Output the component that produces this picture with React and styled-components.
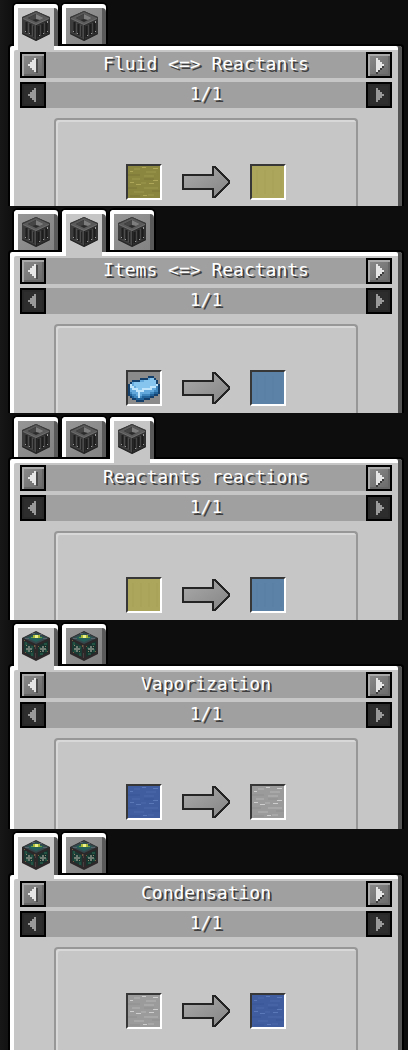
import React from 'react';
import styled, { createGlobalStyle } from 'styled-components';

const recipes = [
  { title: 'Fluid <=> Reactants', icon: 'crate', tabs: 2, active: 0, input: 'fluidYellow', output: 'yellow', bottom: 6 },
  { title: 'Items <=> Reactants', icon: 'crate', tabs: 3, active: 1, input: 'ingot', output: 'blue', bottom: 7 },
  { title: 'Reactants reactions', icon: 'crate', tabs: 3, active: 2, input: 'yellow', output: 'blue', bottom: 7 },
  { title: 'Vaporization', icon: 'core', tabs: 2, active: 0, input: 'water', output: 'steam', bottom: 9 },
  { title: 'Condensation', icon: 'core', tabs: 2, active: 0, input: 'steam', output: 'water', bottom: 21 },
];

const fluids = {
  fluidYellow: { base: '#8a853f', dark: '#827d3b', mid: '#948f47', light: '#aea75a' },
  yellow: { base: '#aba65c', dark: '#a8a359' },
  blue: { base: '#5d82a7', dark: '#5b80a5' },
  water: { base: '#405da0', dark: '#3c599c', mid: '#4663a5', light: '#5a78b8' },
  steam: { base: '#9b9b9b', dark: '#959595', mid: '#a8a8a8', light: '#cecece' },
};

// x, y, width, shade
const streaks = [
  [6, 2, 6, 'mid'], [14, 1, 4, 'light'], [25, 2, 5, 'light'], [2, 5, 3, 'light'],
  [18, 5, 10, 'mid'], [0, 8, 12, 'dark'], [16, 9, 10, 'mid'], [4, 12, 8, 'mid'],
  [16, 12, 10, 'dark'], [25, 14, 5, 'light'], [2, 16, 4, 'light'], [8, 18, 5, 'light'],
  [21, 17, 5, 'light'], [13, 16, 5, 'mid'], [0, 21, 9, 'dark'], [16, 21, 14, 'mid'],
  [6, 25, 10, 'mid'], [15, 29, 4, 'light'], [24, 24, 8, 'dark'], [2, 29, 10, 'dark'],
  [20, 28, 6, 'mid'],
];

const ingotColors = {
  k: '#14406b', d: '#22639a', m: '#3f86bd', b: '#62a8da', l: '#86c5ee', w: '#bde4fa',
};

const ingotRows = [
  '................',
  '................',
  '..........kkk...',
  '......kkkkbllk..',
  '..kkkkbbllllllk.',
  '.kblllllllllllk.',
  'kwblllllllllllwk',
  'kwwblllllllwwwmk',
  'kbwwwllwwwwwbbmk',
  'kbbbwwwwbbbbbmmk',
  'kmbbbwbbbbbmmddk',
  'kdmmbwbmmmmddkk.',
  '.kdmmwmddddkk...',
  '..kkddddkkk.....',
  '....kkkk........',
  '................',
];

function Crate() {
  return (
    <svg width="28" height="30" viewBox="0 0 28 30" aria-hidden="true">
      <polygon points="14,0 28,6 28,23 14,30 0,23 0,6" fill="#2a2a2a" />
      <polygon points="0,7 14,14 14,30 0,23" fill="#3d3d3d" />
      <polygon points="28,7 14,14 14,30 28,23" fill="#313131" />
      <polygon points="14,0 28,7 14,14 0,7" fill="#5a5a5a" />
      <polygon points="14,3 22,7 14,11 6,7" fill="#2b2b2b" />
      <polygon points="14,3 14,8 10,9 6,7" fill="#454545" />
      <polygon points="14,3 22,7 18,9 14,8" fill="#7d7d7d" />
      <path d="M0 7L14 0.5L28 7" fill="none" stroke="#3c3c3c" />
      <path d="M1 7.5L14 13.5L27 7.5" fill="none" stroke="#6e6e6e" />
      <path d="M4.5 11V22M8.5 13V24" stroke="#1e1e1e" strokeWidth="2" />
      <path d="M6.5 12V23M10.5 14V25" stroke="#4c4c4c" />
      <path d="M11.5 15V26" stroke="#252525" />
      <path d="M16.5 15V26M20.5 13V24M24.5 11V22" stroke="#1c1c1c" strokeWidth="2" />
      <path d="M18.5 14V25M22.5 12V23" stroke="#454545" />
      <path d="M13.5 14V29" stroke="#4a4a4a" />
      <path d="M14.5 14V29" stroke="#222" />
      <path d="M0.5 22.5L14 29L27.5 22.5" fill="none" stroke="#252525" />
      <path d="M3 20h1v1h-1zM7 22h1v1h-1zM17 24h1v1h-1zM21 22h1v1h-1zM25 20h1v1h-1zM25 10h1v2h-1z" fill="#9a9a9a" />
    </svg>
  );
}

function Core() {
  return (
    <svg width="28" height="30" viewBox="0 0 28 30" aria-hidden="true">
      <polygon points="14,0 28,7 28,23 14,30 0,23 0,7" fill="#2c282a" />
      <polygon points="14,1 27,7 14,13 1,7" fill="#34484c" />
      <polygon points="14,3 23,7 14,11 5,7" fill="#245f59" />
      <path d="M10 2h3v1h-3zM17 3h3v1h-3zM3 7h4v1h-4zM21 7h4v1h-4z" fill="#566169" />
      <path d="M11 4h6v1h-6zM9 6h2v1h-2zM18 6h2v1h-2z" fill="#6b9a44" />
      <rect x="11" y="4" width="7" height="3" fill="#a9ba38" />
      <rect x="13" y="4" width="3" height="3" fill="#eef08a" />
      <polygon points="2,10 12,15 12,26 2,21" fill="#1b3a33" />
      <polygon points="26,10 16,15 16,26 26,21" fill="#17322c" />
      <path d="M3 11h2v3h-2zM9 15h2v3h-2zM4 19h3v2h-3zM9 22h2v3h-2zM17 16h2v2h-2zM22 12h3v2h-3zM23 18h2v3h-2zM18 22h3v2h-3z" fill="#225343" />
      <path d="M6 15h2v6h-2zM4 17h6v2h-6zM20 15h2v6h-2zM18 17h6v2h-6z" fill="#6e7c73" />
      <path d="M4 14h1v1h-1zM9 20h1v1h-1zM18 20h1v1h-1zM23 15h1v1h-1z" fill="#94876d" />
      <path d="M2 9h1v1h-1zM12 14h1v2h-1zM3 21h1v1h-1zM16 15h1v1h-1zM25 20h1v1h-1z" fill="#74603f" />
      <path d="M13 14h1v4h-1zM13 22h1v5h-1z" fill="#4a3f41" />
    </svg>
  );
}

function Fluid({ kind }) {
  const c = fluids[kind];
  return (
    <svg width="32" height="32" viewBox="0 0 32 32" shapeRendering="crispEdges" aria-hidden="true">
      <rect width="32" height="32" fill={c.base} />
      {c.light
        ? streaks.map(([x, y, w, shade]) => (
            <rect key={`${x}-${y}`} x={x} y={y} width={w} height={shade === 'light' ? 1 : 2} fill={c[shade]} />
          ))
        : [4, 12, 20, 28].map((x) => <rect key={x} x={x} y="4" width="2" height="24" fill={c.dark} />)}
    </svg>
  );
}

function Ingot() {
  return (
    <svg width="32" height="32" viewBox="0 0 16 16" shapeRendering="crispEdges" aria-hidden="true">
      {ingotRows.map((row, y) =>
        row.split('').map((p, x) =>
          p === '.' ? null : <rect key={`${x}-${y}`} x={x} y={y} width="1" height="1" fill={ingotColors[p]} />
        )
      )}
    </svg>
  );
}

function ProgressArrow() {
  return (
    <svg width="48" height="32" viewBox="0 0 48 32" shapeRendering="crispEdges" aria-hidden="true">
      <defs>
        <linearGradient id="arrowFill" x1="0" y1="0" x2="1" y2="1">
          <stop offset="0" stopColor="#aaaaaa" />
          <stop offset="1" stopColor="#858585" />
        </linearGradient>
      </defs>
      <path d="M1 9H31V1H33L47 15V17L33 31H31V23H1Z" fill="url(#arrowFill)" stroke="#242424" strokeWidth="2" />
    </svg>
  );
}

function Triangle({ right, disabled }) {
  return (
    <svg width="22" height="22" viewBox="0 0 22 22" shapeRendering="crispEdges" aria-hidden="true">
      <g transform={right ? 'translate(22 0) scale(-1 1)' : undefined}>
        {!disabled && <path d="M14 5h2v14h-2z" fill={right ? 'none' : '#4b4b4b'} />}
        {!disabled && right && <path d="M6 12h2v2h2v2h2v2h2v2h-2v-2h-2v-2h-2v-2h-2z" fill="#3d3d3d" />}
        <path d="M12 4h2v14h-2v-2h-2v-2h-2v-2h-2v-2h2v-2h2v-2h2z" fill={disabled ? '#999999' : '#e6e6e6'} />
      </g>
    </svg>
  );
}

function Pager({ label, what, disabled }) {
  return (
    <Row>
      <ArrowButton aria-label={`Previous ${what}`} disabled={disabled}>
        <Triangle disabled={disabled} />
      </ArrowButton>
      <Label as={disabled ? 'span' : 'h2'}>{label}</Label>
      <ArrowButton aria-label={`Next ${what}`} disabled={disabled}>
        <Triangle right disabled={disabled} />
      </ArrowButton>
    </Row>
  );
}

function SlotItem({ kind }) {
  return <Slot>{kind === 'ingot' ? <Ingot /> : <Fluid kind={kind} />}</Slot>;
}

function Recipe({ recipe }) {
  const Icon = recipe.icon === 'crate' ? Crate : Core;
  return (
    <Section>
      <Tabs role="tablist">
        {Array.from({ length: recipe.tabs }, (_, i) => (
          <Tab
            key={i}
            role="tab"
            aria-label={`Category ${i + 1}`}
            aria-selected={i === recipe.active}
            $active={i === recipe.active}
          >
            <Icon />
          </Tab>
        ))}
      </Tabs>
      <Panel>
        <Pager label={recipe.title} what="category" />
        <Pager label="1/1" what="page" disabled />
        <Frame $bottom={recipe.bottom}>
          <SlotItem kind={recipe.input} />
          <ProgressArrow />
          <SlotItem kind={recipe.output} />
        </Frame>
      </Panel>
    </Section>
  );
}

export default function App() {
  return (
    <>
      <GlobalStyle />
      <Page>
        {recipes.map((recipe) => (
          <Recipe key={recipe.title} recipe={recipe} />
        ))}
      </Page>
    </>
  );
}

const GlobalStyle = createGlobalStyle`
  * {
    box-sizing: border-box;
  }

  body {
    margin: 0;
    background-color: #0d0d0d;
  }
`;

const Page = styled.main`
  font-family: "DejaVu Sans Mono", monospace;
`;

const Section = styled.section`
  padding: 4px 4px 0 8px;
  background: linear-gradient(90deg, #171717, #0d0d0d 16px);
`;

const Tabs = styled.div`
  display: flex;
  gap: 4px;
  padding-left: 6px;
`;

const Tab = styled.button`
  position: relative;
  width: 44px;
  height: 40px;
  padding: 7px 8px 3px;
  border: none;
  border-radius: 4px 4px 0 0;
  background: ${(props) => (props.$active ? '#c6c6c6' : 'linear-gradient(135deg, #989898, #828282)')};
  box-shadow: inset 4px 0 #fff, inset 0 4px #fff, inset -4px 0 #5a5a5a, 0 0 0 2px #000;
  cursor: pointer;

  svg {
    display: block;
  }

  /* joins the open tab with the panel below it */
  &::after {
    content: '';
    display: ${(props) => (props.$active ? 'block' : 'none')};
    position: absolute;
    left: 0;
    right: 0;
    top: 100%;
    height: 6px;
    background:
      linear-gradient(#5a5a5a, #5a5a5a) right top / 4px 2px no-repeat,
      linear-gradient(90deg, #fff 4px, #c6c6c6 4px, #c6c6c6 40px, #fff 40px);
  }
`;

const Panel = styled.div`
  display: flex;
  flex-direction: column;
  gap: 4px;
  padding: 6px 10px 0;
  border: 2px solid #000;
  border-bottom: none;
  border-radius: 4px 4px 0 0;
  background-color: #c6c6c6;
  box-shadow: inset -4px 0 #555, inset 4px 4px #fff;
`;

const Row = styled.div`
  display: flex;
  height: 26px;
  background-color: #a0a0a0;
`;

const ArrowButton = styled.button`
  flex: none;
  width: 26px;
  height: 26px;
  padding: 0;
  border: 2px solid #000;
  background: ${(props) => (props.disabled ? '#2d2d2d' : 'linear-gradient(135deg, #8c8c8c, #686868)')};
  box-shadow: ${(props) =>
    props.disabled ? 'inset 0 0 0 2px #292929' : 'inset 2px 2px #a9a9a9, inset -2px -2px #666'};

  svg {
    display: block;
  }
`;

const Label = styled.span`
  flex: 1;
  margin: 0;
  color: #fff;
  font-size: 18px;
  font-weight: normal;
  line-height: 24px;
  text-align: center;
  text-shadow: 2px 2px #3f3f3f;
  white-space: nowrap;
`;

const Frame = styled.div`
  display: flex;
  align-items: center;
  justify-content: center;
  gap: 20px;
  margin: 6px 34px 0;
  padding: 44px 0 ${(props) => props.$bottom}px;
  border: 2px solid #979797;
  border-bottom: none;
  border-radius: 4px 4px 0 0;
  box-shadow: inset 2px 2px #d8d8d8;
`;

const Slot = styled.div`
  width: 36px;
  height: 36px;
  border: 2px solid;
  border-color: #373737 #fff #fff #373737;
  background-color: #8b8b8b;

  svg {
    display: block;
  }
`;
